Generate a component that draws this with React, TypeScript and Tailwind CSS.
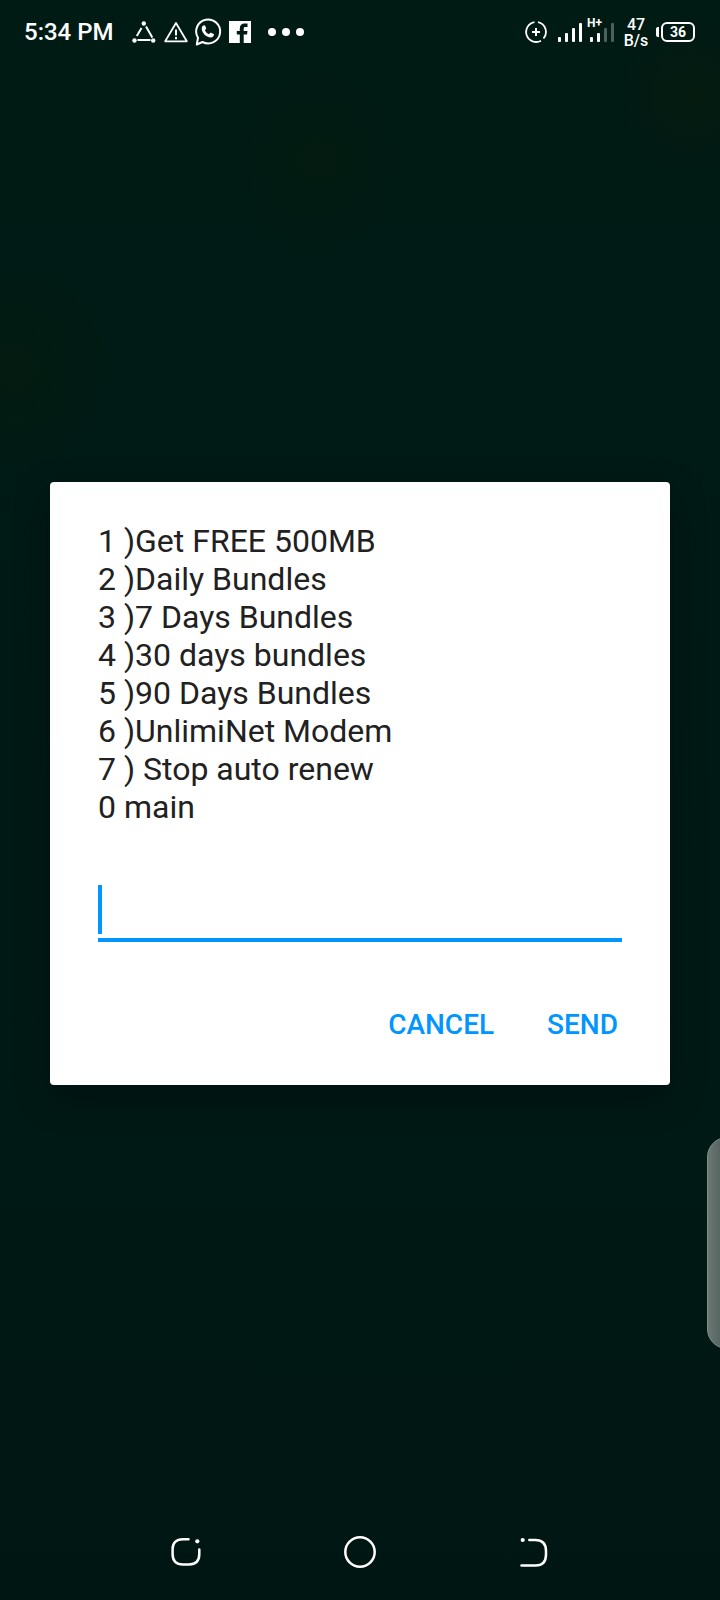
import React from "react";

const options = [
  "1 )Get FREE 500MB",
  "2 )Daily Bundles",
  "3 )7 Days Bundles",
  "4 )30 days bundles",
  "5 )90 Days Bundles",
  "6 )UnlimiNet Modem",
  "7 ) Stop auto renew",
  "0 main",
];

function NotificationIcons() {
  return (
    <div className="ml-3.5 flex items-center">
      <svg className="h-8 w-8" viewBox="0 0 32 32" fill="none" stroke="white" strokeWidth="2">
        <path d="M18 10.500 24.300 21.500M13.500 12 8.800 20M9.500 24h13" />
        <g fill="white" stroke="none">
          <circle cx="15.800" cy="7.500" r="2.200" />
          <circle cx="6.500" cy="24.500" r="2.200" />
          <circle cx="25.200" cy="24.500" r="2.200" />
        </g>
      </svg>
      <svg className="h-8 w-8" viewBox="0 0 32 32" fill="none" stroke="white" strokeWidth="1.8" strokeLinejoin="round">
        <path d="M16 7 26.800 25.300H5.200z" />
        <path d="M16 13.500v6M16 21v2.200" strokeWidth="2" />
      </svg>
      <svg className="h-8 w-8" viewBox="0 0 32 32" fill="none" stroke="white" strokeWidth="2" strokeLinejoin="round">
        <path d="M4.800 28.500 6 21.800A12 12 0 1 1 10.500 26Z" />
        <path
          transform="translate(7.800 7) scale(.68)"
          fill="white"
          stroke="none"
          d="M7.500 10.500c1.300 2.700 3.300 4.700 6 6l1.900-2c.4-.4.900-.4 1.300-.2l3.500 1.700c.6.300.8.700.7 1.300-.5 2.400-2.300 3.900-4.700 3.900C9 21 2.800 14 2.800 8c0-2.400 1.500-4.400 3.300-4.800.9-.2 1.500 0 1.800.8l1.400 3.300c.2.500.1 1-.2 1.400z"
        />
      </svg>
      <svg className="h-8 w-8" viewBox="0 0 32 32">
        <path
          fill="white"
          fillRule="evenodd"
          d="M5 5h22v22H5zM15.800 27v-8.500h-3V15h3v-2.500c0-3.300 1.900-5 4.900-5h2.800V11h-2c-1.300 0-1.800.6-1.800 1.800V15h3.800l-.5 3.500h-3.300V27z"
        />
      </svg>
      <svg className="ml-2 h-8 w-10" viewBox="0 0 40 32" fill="white">
        <circle cx="8" cy="16" r="4" />
        <circle cx="22" cy="16" r="4" />
        <circle cx="36" cy="16" r="4" />
      </svg>
    </div>
  );
}

function StatusBar() {
  return (
    <header className="flex h-16 shrink-0 items-center justify-between pr-[25px] pl-6 text-white">
      <div className="flex items-center">
        <span className="text-2xl font-medium">5:34 PM</span>
        <NotificationIcons />
      </div>
      <div className="flex items-center">
        <svg className="h-8 w-6" viewBox="0 0 24 32" fill="none" stroke="white" strokeWidth="1.8">
          <path d="M10.500 6.100A10 10 0 1 0 17 24.700M14 6.200A10 10 0 0 1 19.500 22.500" />
          <path d="M12 12v8M8 16h8" strokeWidth="2" />
        </svg>
        <svg className="ml-2 h-8 w-16" viewBox="0 0 64 32" fill="white">
          <rect x="2" y="21" width="3" height="5" rx="1" />
          <rect x="9" y="17" width="3" height="9" rx="1" />
          <rect x="16" y="12" width="3" height="14" rx="1" />
          <rect x="23" y="7" width="3" height="19" rx="1" />
          <text x="31" y="11" fontSize="12" fontWeight="700">H+</text>
          <rect x="34" y="21" width="3" height="5" rx="1" />
          <rect x="41" y="17" width="3" height="9" rx="1" />
          <rect x="48" y="12" width="3" height="14" rx="1" opacity=".3" />
          <rect x="55" y="7" width="3" height="19" rx="1" opacity=".3" />
        </svg>
        <div className="w-8 pt-0.5 text-center text-base leading-4 font-medium">
          <div>47</div>
          <div>B/s</div>
        </div>
        <div className="ml-1 flex items-center gap-0.5">
          <span className="h-2.5 w-[3px] rounded-l-xs bg-white" />
          <span className="flex h-5 w-[34px] items-center justify-center rounded-md border-2 border-white text-sm leading-4 font-bold">
            36
          </span>
        </div>
      </div>
    </header>
  );
}

function UssdDialog() {
  return (
    <form
      role="dialog"
      aria-label="USSD menu"
      onSubmit={(e) => e.preventDefault()}
      className="w-full rounded-sm bg-white px-12 pt-10 pb-[33px] shadow-[0_12px_36px_rgba(0,0,0,0.3)]"
    >
      <ul className="text-[32px] leading-[38px] text-[#212121]">
        {options.map((option) => (
          <li key={option}>{option}</li>
        ))}
      </ul>
      <label className="mt-14 flex h-[60px] items-end border-b-4 border-[#0095ff] pb-1">
        <span className="h-[49px] w-1 bg-[#0095ff]" />
        <input
          type="text"
          aria-label="Reply"
          className="h-[49px] min-w-0 flex-1 bg-transparent text-[32px] text-[#212121] caret-transparent outline-none"
        />
      </label>
      <div className="mt-14 flex justify-end gap-[53px] pr-1 text-[28px] font-medium text-[#0095ff]">
        <button type="button" className="h-[54px]">CANCEL</button>
        <button type="submit" className="h-[54px]">SEND</button>
      </div>
    </form>
  );
}

function NavBar() {
  return (
    <nav className="flex h-24 shrink-0 items-center justify-center gap-[142px]">
      <button type="button" aria-label="Recent apps">
        <svg className="h-8 w-8" viewBox="0 0 32 32" fill="none" stroke="white" strokeWidth="2.500" strokeLinecap="round">
          <path d="M18.500 3.300H13C6 3.300 2.600 7 2.600 13v5c0 7 3.600 10.400 10.400 10.400h6c6.500 0 10.300-3.600 10.300-10.400v-4.500" />
          <circle cx="27.300" cy="5.300" r="2.100" fill="white" stroke="none" />
        </svg>
      </button>
      <button type="button" aria-label="Home">
        <svg className="h-8 w-8" viewBox="0 0 32 32" fill="none" stroke="white" strokeWidth="2.500">
          <circle cx="16" cy="16" r="14.700" />
        </svg>
      </button>
      <button type="button" aria-label="Back">
        <svg className="h-8 w-8" viewBox="0 0 32 32" fill="none" stroke="white" strokeWidth="2.500" strokeLinecap="round">
          <path d="M11.300 4H17c8 0 11 4.500 11 11v3.500c0 7-3.500 11-10.500 11H3.500" />
          <circle cx="4.700" cy="4" r="2.100" fill="white" stroke="none" />
        </svg>
      </button>
    </nav>
  );
}

export default function App() {
  return (
    <div className="relative flex min-h-screen flex-col overflow-hidden bg-[#001812] bg-[radial-gradient(circle_at_44%_10%,#031b10_0,transparent_90px),radial-gradient(circle_at_96%_6%,#051b10_0,transparent_80px),radial-gradient(circle_at_2%_23%,#031b10_0,transparent_100px),linear-gradient(#001a14,#001915_70%,#001612)] font-['Roboto',sans-serif]">
      <StatusBar />
      <main className="flex flex-1 items-center px-[50px] pb-0.5">
        <UssdDialog />
      </main>
      <NavBar />
      <div className="absolute top-[1137px] -right-[27px] h-[212px] w-10 rounded-[30px] border border-[#81908b] bg-linear-to-r from-[#697873] to-[#586762] to-30%" />
    </div>
  );
}
